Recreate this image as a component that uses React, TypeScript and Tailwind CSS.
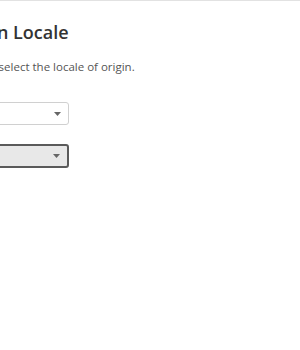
import React from "react"

const Caret = () => (
    <svg width="7" height="4" viewBox="0 0 7 4" className="absolute right-[7px] top-1/2 -translate-y-1/2">
        <path d="M0 0 L7 0 L3.5 4 Z" fill="#666" />
    </svg>
)

const App = () => {
    return (
        <div className="w-[300px] h-[350px] bg-white overflow-hidden border-t border-[#e2e2e2]" style={{ fontFamily: '"Open Sans", sans-serif' }}>
            <div className="-ml-[40px] pt-[18px] flex flex-col">
                <h1 className="-ml-[5px] text-[18px] font-semibold text-[#333] leading-[26px]">Origin Locale</h1>
                <p className="ml-[1px] mt-[14px] text-[11.5px] text-[#555] leading-[16px]">Please select the locale of origin.</p>

                <div className="mt-[27px] relative w-[109px] h-[23px] rounded-[3px] border border-[#d0d0d0] bg-white">
                    <Caret />
                </div>

                <div className="mt-[19px] relative w-[109px] h-[24px] rounded-[3px] border-2 border-[#5a5a5a] bg-[#e8e8e8]">
                    <Caret />
                </div>
            </div>
        </div>
    )
}

export default App
